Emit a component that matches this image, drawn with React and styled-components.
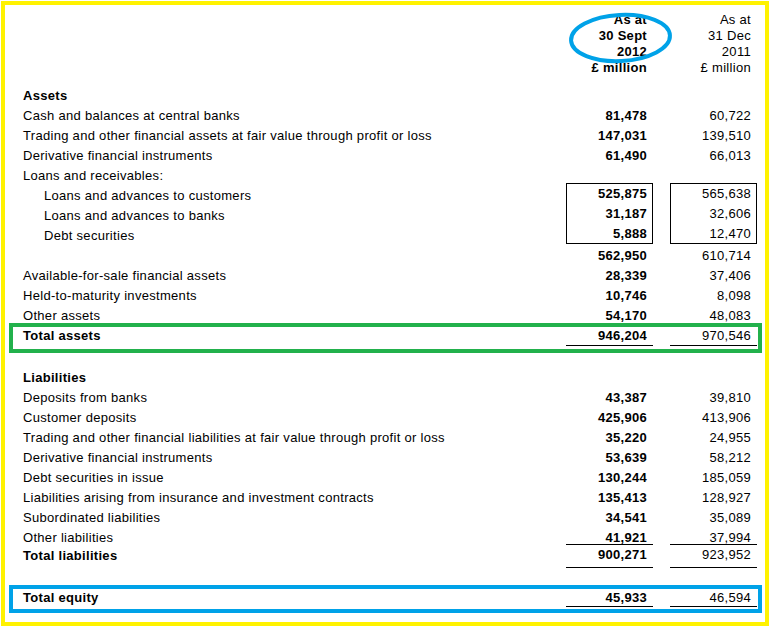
import React from 'react';
import styled, { createGlobalStyle } from 'styled-components';

// 대차대조표 요약 (2012.09.30 vs 2011.12.31)
const assets = [
    { label: 'Cash and balances at central banks', now: '81,478', prev: '60,722' },
    { label: 'Trading and other financial assets at fair value through profit or loss', now: '147,031', prev: '139,510' },
    { label: 'Derivative financial instruments', now: '61,490', prev: '66,013' },
    { label: 'Loans and receivables:' },
];

const loans = [
    { label: 'Loans and advances to customers', now: '525,875', prev: '565,638' },
    { label: 'Loans and advances to banks', now: '31,187', prev: '32,606' },
    { label: 'Debt securities', now: '5,888', prev: '12,470' },
];

const otherAssets = [
    { label: '', now: '562,950', prev: '610,714' },
    { label: 'Available-for-sale financial assets', now: '28,339', prev: '37,406' },
    { label: 'Held-to-maturity investments', now: '10,746', prev: '8,098' },
    { label: 'Other assets', now: '54,170', prev: '48,083' },
];

const liabilities = [
    { label: 'Deposits from banks', now: '43,387', prev: '39,810' },
    { label: 'Customer deposits', now: '425,906', prev: '413,906' },
    { label: 'Trading and other financial liabilities at fair value through profit or loss', now: '35,220', prev: '24,955' },
    { label: 'Derivative financial instruments', now: '53,639', prev: '58,212' },
    { label: 'Debt securities in issue', now: '130,244', prev: '185,059' },
    { label: 'Liabilities arising from insurance and investment contracts', now: '135,413', prev: '128,927' },
    { label: 'Subordinated liabilities', now: '34,541', prev: '35,089' },
    { label: 'Other liabilities', now: '41,921', prev: '37,994' },
];

const App = () => {
    return (
        <>
            <GlobalStyle />
            <Frame>
                <Header>
                    <span />
                    <HeadCell $bold>As at<br />30 Sept<br />2012<br />£ million</HeadCell>
                    <HeadCell>As at<br />31 Dec<br />2011<br />£ million</HeadCell>
                </Header>

                <Row>
                    <Label $bold>Assets</Label>
                </Row>
                {assets.map((r) => (
                    <Row key={r.label}>
                        <Label>{r.label}</Label>
                        <Amount $bold>{r.now}</Amount>
                        <Amount>{r.prev}</Amount>
                    </Row>
                ))}

                <Group>
                    <GroupLabels>
                        {loans.map((r) => (
                            <GroupLine key={r.label}><Label $indent>{r.label}</Label></GroupLine>
                        ))}
                    </GroupLabels>
                    <NumberBox>
                        {loans.map((r) => <BoxLine key={r.label} $bold>{r.now}</BoxLine>)}
                    </NumberBox>
                    <NumberBox>
                        {loans.map((r) => <BoxLine key={r.label}>{r.prev}</BoxLine>)}
                    </NumberBox>
                </Group>

                {otherAssets.map((r) => (
                    <Row key={r.now}>
                        <Label>{r.label}</Label>
                        <Amount $bold>{r.now}</Amount>
                        <Amount>{r.prev}</Amount>
                    </Row>
                ))}

                <Highlight $color="#22b14c" $top={-2} $line={18} $bottom={3}>
                    <Label $bold>Total assets</Label>
                    <Amount $bold $under>946,204</Amount>
                    <Amount $under>970,546</Amount>
                </Highlight>

                <Row $gap={14}>
                    <Label $bold>Liabilities</Label>
                </Row>
                {liabilities.map((r) => (
                    <Row key={r.label}>
                        <Label>{r.label}</Label>
                        <Amount $bold>{r.now}</Amount>
                        <Amount>{r.prev}</Amount>
                    </Row>
                ))}

                <TotalRow>
                    <Label $bold>Total liabilities</Label>
                    <TotalAmount $bold>900,271</TotalAmount>
                    <TotalAmount>923,952</TotalAmount>
                </TotalRow>

                <Highlight $color="#00a2e8" $top={17} $line={17} $bottom={2}>
                    <Label $bold>Total equity</Label>
                    <Amount $bold $under>45,933</Amount>
                    <Amount $under>46,594</Amount>
                </Highlight>

                {/* 파란 동그라미 표시 */}
                <Circle width="108" height="56" viewBox="0 0 108 56">
                    <ellipse
                        cx="53.5"
                        cy="28"
                        rx="49.5"
                        ry="23"
                        fill="none"
                        stroke="#00a2e8"
                        strokeWidth="4"
                        transform="rotate(-3 53.5 28)"
                    />
                </Circle>
            </Frame>
        </>
    );
};

// 스타일 컴포넌트
const GlobalStyle = createGlobalStyle`
  body {
    margin: 0;
    background: #ffffff;
    font-family: "Liberation Sans", Arial, sans-serif;
    font-size: 13px;
    letter-spacing: 0.3px;
    color: #000000;
  }
`;

const Frame = styled.div`
  position: relative;
  box-sizing: border-box;
  margin: 1px;
  width: 768px;
  height: 625px;
  border: 4px solid #fff200;
  padding: 7px 3px 0 4px;
  background: #ffffff;
`;

const Header = styled.div`
  display: grid;
  grid-template-columns: 1fr 87px 87px;
  column-gap: 17px;
  padding: 0 5px 0 14px;
  margin-bottom: 9px;
`;

const HeadCell = styled.div`
  text-align: right;
  padding-right: 6px;
  line-height: 16px;
  font-weight: ${props => (props.$bold ? 700 : 400)};
`;

const Row = styled.div`
  display: grid;
  grid-template-columns: 1fr 87px 87px;
  column-gap: 17px;
  align-items: center;
  height: 20px;
  padding: 0 5px 0 14px;
  margin-top: ${props => props.$gap || 0}px;
`;

const Label = styled.div`
  white-space: nowrap;
  padding-left: ${props => (props.$indent ? 21 : 0)}px;
  font-weight: ${props => (props.$bold ? 700 : 400)};
`;

const Amount = styled.div`
  text-align: right;
  padding-right: 6px;
  font-weight: ${props => (props.$bold ? 700 : 400)};
  border-bottom: ${props => (props.$under ? '1px solid #000' : 'none')};
`;

const Group = styled.div`
  display: grid;
  grid-template-columns: 1fr 87px 87px;
  column-gap: 17px;
  height: 60px;
  padding: 0 5px 0 14px;
`;

const GroupLabels = styled.div`
  display: flex;
  flex-direction: column;
`;

const GroupLine = styled.div`
  height: 20px;
  display: flex;
  align-items: center;
`;

const NumberBox = styled.div`
  box-sizing: border-box;
  height: 61px;
  margin-top: -2px;
  border: 1px solid #000;
  display: flex;
  flex-direction: column;
`;

const BoxLine = styled.div`
  flex: 1;
  display: flex;
  align-items: center;
  justify-content: flex-end;
  padding-right: 5px;
  font-weight: ${props => (props.$bold ? 700 : 400)};
`;

const Highlight = styled.div`
  display: grid;
  grid-template-columns: 1fr 87px 87px;
  column-gap: 17px;
  align-items: start;
  margin-top: ${props => props.$top}px;
  border: 4px solid ${props => props.$color};
  padding: 0 1px ${props => props.$bottom}px 10px;
  line-height: ${props => props.$line}px;
`;

const TotalRow = styled.div`
  display: grid;
  grid-template-columns: 1fr 87px 87px;
  column-gap: 17px;
  align-items: start;
  margin-top: -3px;
  padding: 0 5px 0 14px;
  line-height: 20px;

  & > ${Label} {
    padding-top: 2px;
  }
`;

const TotalAmount = styled.div`
  text-align: right;
  padding: 0 6px 2px 0;
  border-top: 1px solid #000;
  border-bottom: 1px solid #000;
  font-weight: ${props => (props.$bold ? 700 : 400)};
`;

const Circle = styled.svg`
  position: absolute;
  left: 562px;
  top: 5px;
  pointer-events: none;
`;

export default App;
